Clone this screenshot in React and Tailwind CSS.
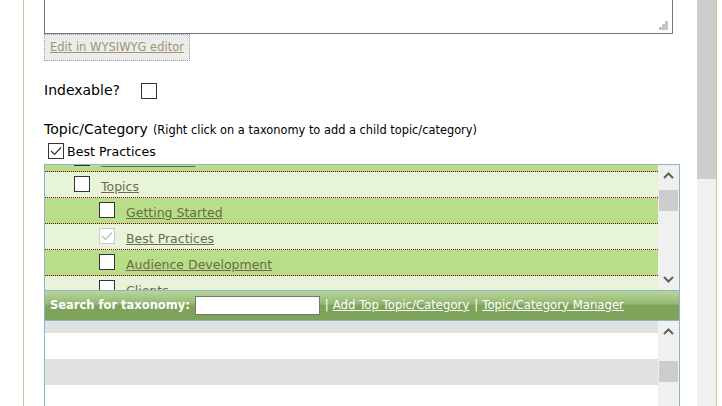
import React from 'react';

const Box = ({ checked = false, disabled = false }) => (
  <span
    className={`flex h-[16px] w-[16px] shrink-0 items-center justify-center border bg-white ${
      disabled ? 'border-[#c9c9c9]' : 'border-[#333333]'
    }`}
  >
    {checked && (
      <svg width="12" height="10" viewBox="0 0 12 10">
        <polyline
          points="1,5 4.5,8.5 11,1.5"
          fill="none"
          stroke={disabled ? '#bdbdbd' : '#333333'}
          strokeWidth="1.2"
        />
      </svg>
    )}
  </span>
);

const Chevron = ({ down = false }) => (
  <svg width="11" height="7" viewBox="0 0 11 7">
    <polyline
      points={down ? '1,1 5.5,5.5 10,1' : '1,6 5.5,1.5 10,6'}
      fill="none"
      stroke="#606060"
      strokeWidth="2"
    />
  </svg>
);

const treeRows = [
  { label: 'Photo Galleries', level: 1 },
  { label: 'Topics', level: 1 },
  { label: 'Getting Started', level: 2 },
  { label: 'Best Practices', level: 2, checked: true, disabled: true },
  { label: 'Audience Development', level: 2 },
  { label: 'Clients', level: 2 },
];

const TreeRow = ({ row, index }) => (
  <div
    className={`flex h-[26px] items-start border-b border-dotted border-[#8b0000] ${
      index % 2 === 0 ? 'bg-[#b9de89]' : 'bg-[#e8f4d9]'
    } ${row.level === 1 ? 'pl-[29px]' : 'pl-[54px]'}`}
  >
    <span className="mt-[4px]">
      <Box checked={row.checked} disabled={row.disabled} />
    </span>
    <a className="ml-[11px] mt-[7px] whitespace-nowrap text-[12.5px] leading-[15px] text-[#6b6b47] underline">
      {row.label}
    </a>
  </div>
);

const ScrollBar = ({ thumbGap, showDown = true }) => (
  <div className="flex w-[21px] shrink-0 flex-col bg-[#f0f0f0]">
    <div className="flex h-[21px] items-center justify-center">
      <Chevron />
    </div>
    <div className={`mx-[1px] h-[21px] bg-[#cdcdcd] ${thumbGap}`} />
    <div className="flex-1" />
    {showDown && (
      <div className="flex h-[21px] items-center justify-center">
        <Chevron down />
      </div>
    )}
  </div>
);

export default function App() {
  return (
    <div className="flex h-[406px] w-[722px] overflow-hidden bg-white font-['DejaVu_Sans',Verdana,sans-serif] text-black">
      <div className="w-[23px] shrink-0" />
      <div className="w-px shrink-0 bg-[#c8cba0]" />

      <main className="w-[673px] shrink-0 pl-[20px]">
        {/* textarea, scrolled so only its bottom shows */}
        <div className="relative h-[34px] w-[629px] border-x border-b border-[#767676] bg-white">
          <svg className="absolute bottom-[2px] right-[3px]" width="10" height="10" viewBox="0 0 10 10">
            <rect x="6" y="0" width="3" height="3" fill="#c4c4c4" />
            <rect x="3" y="3" width="3" height="3" fill="#c4c4c4" />
            <rect x="6" y="3" width="3" height="3" fill="#c4c4c4" />
            <rect x="0" y="6" width="3" height="3" fill="#c4c4c4" />
            <rect x="3" y="6" width="3" height="3" fill="#c4c4c4" />
            <rect x="6" y="6" width="3" height="3" fill="#c4c4c4" />
          </svg>
        </div>

        <div className="flex h-[27px] w-[146px] items-center border border-dotted border-[#9a9a9a] bg-[#ececec] px-[5px] text-[11.5px] whitespace-nowrap text-[#a0966a] underline">
          Edit in WYSIWYG editor
        </div>

        <div className="mt-[21px] flex h-[17px] items-center">
          <span className="w-[97px] whitespace-nowrap text-[14px] leading-[17px]">Indexable?</span>
          <Box />
        </div>

        <div className="mt-[21px] flex h-[18px] items-baseline whitespace-nowrap">
          <span className="text-[14px] leading-[18px]">Topic/Category</span>
          <span className="ml-[5px] text-[11.4px]">(Right click on a taxonomy to add a child topic/category)</span>
        </div>

        <div className="mt-[4px] flex h-[17px] items-center pl-[4px]">
          <Box checked />
          <span className="ml-[3px] mt-[3px] whitespace-nowrap text-[12.6px]">Best Practices</span>
        </div>

        {/* taxonomy tree */}
        <div className="mt-[5px] w-[636px] border-x border-[#8fb4c9]">
          <div className="flex h-[126px] border-t border-[#8fb4c9]">
            <div className="w-[613px] overflow-hidden">
              <div className="-mt-[19px]">
                {treeRows.map((row, i) => (
                  <TreeRow key={row.label} row={row} index={i} />
                ))}
              </div>
            </div>
            <ScrollBar thumbGap="mt-[4px]" />
          </div>

          <div className="flex h-[31px] items-center whitespace-nowrap border-y border-[#8fb4c9] bg-[linear-gradient(#b7d69b,#94b872_45%,#7ea35a_50%,#7ea35a)] pl-[5px] text-[11.7px] text-white">
            <span className="text-[11.5px] font-bold">Search for taxonomy:</span>
            <span className="ml-[5px] h-[19px] w-[125px] border border-[#767676] bg-white" />
            <span className="ml-[5px]">|</span>
            <a className="ml-[4px] underline">Add Top Topic/Category</a>
            <span className="ml-[5px]">|</span>
            <a className="ml-[4px] underline">Topic/Category Manager</a>
          </div>

          <div className="flex h-[90px]">
            <div className="w-[613px] overflow-hidden">
              <div className="-mt-[14px]">
                <div className="h-[26px] bg-[#e1e1e1]" />
                <div className="h-[26px] bg-white" />
                <div className="h-[26px] bg-[#e1e1e1]" />
                <div className="h-[26px] bg-white" />
              </div>
            </div>
            <ScrollBar thumbGap="mt-[19px]" showDown={false} />
          </div>
        </div>
      </main>

      {/* page scrollbar */}
      <div className="w-[19px] shrink-0 bg-[#f0f0f0]">
        <div className="h-[179px] bg-[#cdcdcd]" />
      </div>
      <div className="w-px shrink-0 bg-[#c8cba0]" />
      <div className="w-[5px] shrink-0" />
    </div>
  );
}
